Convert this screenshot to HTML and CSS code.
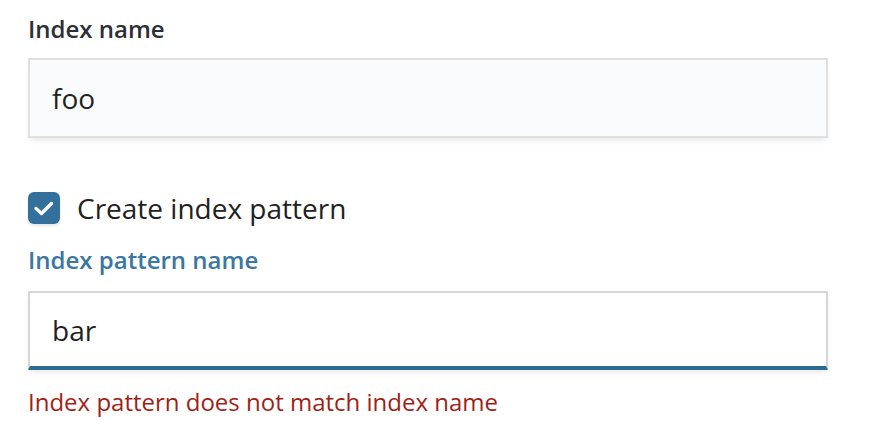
FILE: index.html
```html
<!DOCTYPE html>
<html>
<head>
<meta charset="utf-8">
<link rel="stylesheet" href="styles.css">
</head>
<body>
<div class="form">
  <div class="label label-name">Index name</div>
  <div class="field field-readonly">foo</div>
  <div class="check-row">
    <span class="checkbox">
      <svg width="32" height="32" viewBox="0 0 32 32"><path d="M8 16.5 L13.5 21.5 L23.5 11.5" fill="none" stroke="#fff" stroke-width="3.4" stroke-linecap="round" stroke-linejoin="round"/></svg>
    </span>
    <span class="check-text">Create index pattern</span>
  </div>
  <div class="label label-active">Index pattern name</div>
  <div class="field field-focus">bar</div>
  <div class="error">Index pattern does not match index name</div>
</div>
</body>
</html>
```
FILE: styles.css
```css
html, body {
  margin: 0;
  padding: 0;
  background: #fff;
}
.form {
  font-family: "Open Sans", "Noto Sans", sans-serif;
  padding: 11px 0 0 28px;
  width: 800px;
}
.label {
  font-size: 24px;
  line-height: 36px;
  font-weight: 600;
}
.label-name {
  color: #2d2f36;
}
.label-active {
  color: #3b77a0;
  margin-top: 18px;
}
.field {
  box-sizing: border-box;
  width: 800px;
  font-size: 28px;
  color: #222;
  display: flex;
  align-items: center;
  padding-left: 22px;
  box-shadow: 0 4px 6px -2px rgba(0, 0, 0, 0.1);
}
.field-readonly {
  margin-top: 11px;
  height: 80px;
  background: #fafbfc;
  border: 2px solid #e0e0e0;
}
.field-focus {
  margin-top: 13px;
  height: 79px;
  background: #fff;
  border: 2px solid #d6d6d6;
  border-bottom: 4px solid #2e6b93;
}
.check-row {
  margin-top: 54px;
  display: flex;
  align-items: center;
  height: 32px;
  gap: 17px;
}
.checkbox {
  width: 32px;
  height: 32px;
  border-radius: 6px;
  background: #33709b;
  display: flex;
  box-shadow: 0 2px 3px rgba(0, 0, 0, 0.1);
}
.check-text {
  font-size: 28px;
  color: #222;
  line-height: 36px;
}
.error {
  margin-top: 14px;
  font-size: 24px;
  line-height: 36px;
  color: #9f1f15;
}
```
